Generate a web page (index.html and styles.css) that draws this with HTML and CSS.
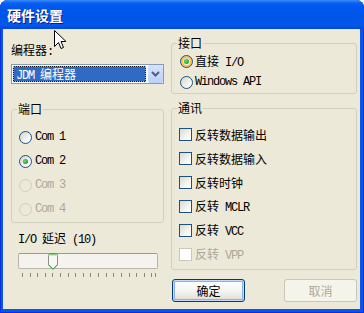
FILE: index.html
```html
<!DOCTYPE html>
<html lang="zh-CN">
<head>
    <meta charset="UTF-8">
    <title>硬件设置</title>
    <link rel="stylesheet" href="styles.css">
</head>
<body>
    <div class="window">
        <div class="titlebar">硬件设置</div>
        <div class="client">
            <div class="col-left">
                <div class="label">编程器<span class="en">:</span></div>
                <div class="combo">
                    <div class="combo-value"><span class="en">JDM </span>编程器</div>
                    <div class="combo-btn">
                        <svg width="9" height="6" viewBox="0 0 9 6"><polyline points="1,1 4.5,4.5 8,1" fill="none" stroke="#4d6185" stroke-width="2"/></svg>
                    </div>
                </div>
                <fieldset class="group ports">
                    <legend>端口</legend>
                    <div class="opts">
                        <div class="opt"><span class="radio"></span><span class="text en">Com 1</span></div>
                        <div class="opt"><span class="radio on"></span><span class="text en">Com 2</span></div>
                        <div class="opt off"><span class="radio"></span><span class="text en">Com 3</span></div>
                        <div class="opt off"><span class="radio"></span><span class="text en">Com 4</span></div>
                    </div>
                </fieldset>
                <div class="delay"><span class="en">I/O </span>延迟<span class="en"> (10)</span></div>
                <div class="slider">
                    <svg class="thumb" width="10" height="17" viewBox="0 0 10 17">
                        <path d="M0.5,2.5 Q0.5,0.5 2.5,0.5 H7.5 Q9.5,0.5 9.5,2.5 V12 L5,16.5 L0.5,12 Z" fill="#f7f7f4" stroke="#8f8f8a"/>
                        <path d="M1.5,1 H8.5" stroke="#21a121" stroke-width="1"/>
                        <path d="M1.5,2 H8.5" stroke="#8fd88c" stroke-width="1"/>
                        <path d="M1,12 L5,16 L9,12" fill="none" stroke="#3cae3a" stroke-width="1"/>
                    </svg>
                </div>
                <div class="ticks">
                    <span></span><span></span><span></span><span></span><span></span><span></span>
                    <span></span><span></span><span></span><span></span><span></span><span></span>
                    <span></span><span></span><span></span><span></span><span></span><span></span>
                    <span class="last"></span>
                </div>
            </div>
            <div class="col-right">
                <fieldset class="group iface">
                    <legend>接口</legend>
                    <div class="opts">
                        <div class="opt"><span class="radio on hot"></span><span class="text">直接<span class="en"> I/O</span></span></div>
                        <div class="opt"><span class="radio"></span><span class="text en">Windows API</span></div>
                    </div>
                </fieldset>
                <fieldset class="group comm">
                    <legend>通讯</legend>
                    <div class="opts">
                        <div class="opt"><span class="check"></span><span class="text">反转数据输出</span></div>
                        <div class="opt"><span class="check"></span><span class="text">反转数据输入</span></div>
                        <div class="opt"><span class="check"></span><span class="text">反转时钟</span></div>
                        <div class="opt"><span class="check"></span><span class="text">反转<span class="en"> MCLR</span></span></div>
                        <div class="opt"><span class="check"></span><span class="text">反转<span class="en"> VCC</span></span></div>
                        <div class="opt off"><span class="check"></span><span class="text">反转<span class="en"> VPP</span></span></div>
                    </div>
                </fieldset>
                <div class="buttons">
                    <button class="btn default">确定</button>
                    <button class="btn" disabled>取消</button>
                </div>
            </div>
        </div>
        <svg class="cursor" width="13" height="20" viewBox="0 0 13 20">
            <path d="M0.5,0.5 L0.5,16.5 L4.5,12.5 L7,18.5 L9.5,17.5 L7,11.5 L12,11.5 Z" fill="#fff" stroke="#000"/>
        </svg>
    </div>
</body>
</html>
```

FILE: styles.css
```css
body{
    margin: 0;
    font-family: "Noto Sans CJK SC", sans-serif;
    font-size: 12px;
    color: #000;
}
.window{
    position: relative;
    width: 364px;
    height: 313px;
    box-sizing: border-box;
    display: flex;
    flex-direction: column;
    background: #0a55e6;
    border-radius: 8px 8px 0 0;
    padding: 0 4px 4px 3px;
    box-shadow: inset 1px 0 #0831d9, inset -1px 0 #0831d9, inset 0 -1px #0831d9;
}
.titlebar{
    height: 29px;
    box-sizing: border-box;
    margin: 0 -4px 0 -3px;
    padding: 8px 0 0 7px;
    border-radius: 8px 8px 0 0;
    background: linear-gradient(#3d8df8 0%, #0a62f0 10%, #0058ee 22%, #0055e8 60%, #0458ec 86%, #0046d8 100%);
    color: #fff;
    font-size: 14px;
    font-weight: bold;
    line-height: 14px;
    text-shadow: 1px 1px #0a1e8c;
}
.client{
    flex: 1;
    display: flex;
    gap: 7px;
    background: #ece9d8;
    padding: 8px 3px 0 8px;
}
.en{
    font-family: "Liberation Mono", monospace;
    font-size: 12px;
    letter-spacing: -1.2px;
    white-space: pre;
}
.col-left{
    width: 153px;
    display: flex;
    flex-direction: column;
}
.col-right{
    width: 186px;
    display: flex;
    flex-direction: column;
}
.label{
    margin-top: 7px;
    line-height: 12px;
}
.combo{
    margin-top: 6px;
    height: 20px;
    box-sizing: border-box;
    border: 1px solid #7f9db9;
    background: #fff;
    display: flex;
}
.combo-value{
    flex: 1;
    margin: 1px 2px 1px 1px;
    border: 1px dotted #e6a64a;
    background: linear-gradient(#316ac5, #316ac5) padding-box, #111;
    color: #fff;
    line-height: 14px;
    padding-left: 2px;
}
.combo-btn{
    width: 15px;
    height: 18px;
    border-radius: 2px;
    background: linear-gradient(#d6e2fd, #bccefa);
    display: flex;
    align-items: center;
    justify-content: center;
}
.group{
    margin: 0;
    padding: 0;
    min-inline-size: 0;
    border: 1px solid #d0d0bf;
    border-radius: 3px;
}
.group legend{
    margin-left: 5px;
    padding: 0 1px;
    line-height: 12px;
}
.opts{
    display: flex;
    flex-direction: column;
}
.opt{
    height: 13px;
    display: flex;
    align-items: center;
    gap: 3px;
}
.text{
    line-height: 13px;
}
.opt.off{
    color: #aca899;
}
.ports{
    margin-top: 19px;
}
.ports .opts{
    padding: 16px 0 6px 7px;
    gap: 11px;
}
.iface .opts{
    padding: 6px 0 4px 8px;
    gap: 8px;
}
.iface .opt{
    gap: 2px;
}
.comm{
    margin-top: 8px;
}
.comm .opts{
    padding: 14px 0 8px 7px;
    gap: 11px;
}
.radio{
    width: 13px;
    height: 13px;
    box-sizing: border-box;
    border: 1px solid #1c5180;
    border-radius: 50%;
    background: linear-gradient(135deg, #d4d3cb, #fbfbf9 75%);
    display: flex;
    align-items: center;
    justify-content: center;
    flex-shrink: 0;
}
.radio.on::after{
    content: "";
    width: 5px;
    height: 5px;
    border-radius: 50%;
    background: radial-gradient(circle at 40% 40%, #6fe06b, #21a121 70%);
}
.radio.hot{
    box-shadow: inset 0 0 0 2px #f9bf4e;
}
.opt.off .radio{
    border-color: #d0cec3;
    background: transparent;
}
.check{
    width: 13px;
    height: 13px;
    box-sizing: border-box;
    border: 1px solid #1c5180;
    background: linear-gradient(135deg, #d8d8d2, #f6f6f3 65%, #fff);
    flex-shrink: 0;
}
.opt.off .check{
    border-color: #cac8bb;
    background: #fff;
}
.delay{
    margin: 9px 0 0 7px;
    line-height: 12px;
}
.slider{
    margin: 7px 0 0 7px;
    width: 140px;
    height: 16px;
    box-sizing: border-box;
    border: 1px solid #b9b6a8;
    border-top-color: #9d9a8e;
    border-radius: 2px;
    background: #f4f3ee;
    display: flex;
}
.thumb{
    margin: -1px 0 0 29px;
}
.ticks{
    margin: 4px 0 0 11px;
    width: 134px;
    height: 4px;
    display: flex;
    justify-content: space-between;
}
.ticks span{
    width: 1px;
    height: 4px;
    background: #8a8778;
}
.ticks span.last{
    margin-left: -4px;
}
.buttons{
    margin-top: 9px;
    display: flex;
    justify-content: space-between;
    padding-left: 1px;
}
.btn{
    width: 73px;
    height: 23px;
    box-sizing: border-box;
    border: 1px solid #003c74;
    border-radius: 3px;
    background: linear-gradient(#ffffff, #f4f4f0 55%, #e6e3da 85%, #d6d0c5);
    font-family: "Noto Sans CJK SC", sans-serif;
    font-size: 12px;
    color: #000;
    padding: 0;
}
.btn.default{
    box-shadow: inset 0 0 0 1px #c4dafa, inset 0 0 0 2px #8eb0e8;
}
.btn:disabled{
    border-color: #c9c7ba;
    background: #f5f4ea;
    color: #aca899;
}
.cursor{
    position: absolute;
    left: 54px;
    top: 30px;
}
```
